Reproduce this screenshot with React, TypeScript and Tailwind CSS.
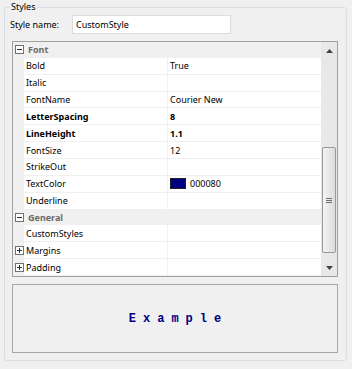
type Row =
  | { kind: "cat"; label: string }
  | { kind: "prop"; label: string; value?: string; bold?: boolean; expand?: boolean; swatch?: string };

const rows: Row[] = [
  { kind: "cat", label: "Font" },
  { kind: "prop", label: "Bold", value: "True" },
  { kind: "prop", label: "Italic" },
  { kind: "prop", label: "FontName", value: "Courier New" },
  { kind: "prop", label: "LetterSpacing", value: "8", bold: true },
  { kind: "prop", label: "LineHeight", value: "1.1", bold: true },
  { kind: "prop", label: "FontSize", value: "12" },
  { kind: "prop", label: "StrikeOut" },
  { kind: "prop", label: "TextColor", value: "000080", swatch: "#000080" },
  { kind: "prop", label: "Underline" },
  { kind: "cat", label: "General" },
  { kind: "prop", label: "CustomStyles" },
  { kind: "prop", label: "Margins", expand: true },
  { kind: "prop", label: "Padding", expand: true },
];

function ToggleBox({ open }: { open: boolean }) {
  return (
    <svg width="9" height="9" viewBox="0 0 9 9" className="shrink-0">
      <rect x="0.5" y="0.5" width="8" height="8" fill="#fff" stroke="#707070" />
      <path d="M2 4.5h5" stroke="#303030" />
      {!open && <path d="M4.5 2v5" stroke="#303030" />}
    </svg>
  );
}

function GridRow({ row }: { row: Row }) {
  if (row.kind === "cat") {
    return (
      <div className="flex-1 flex items-center bg-[#f0f0f0] pl-[2px]">
        <ToggleBox open />
        <span className="ml-[4px] font-bold text-[#6a6a6a]">{row.label}</span>
      </div>
    );
  }
  return (
    <div className="flex-1 flex bg-[#f0f0f0] pb-[1px]">
      <div className="w-[11px] flex items-center pl-[2px]">
        {row.expand && <ToggleBox open={false} />}
      </div>
      <div className={`w-[143px] bg-white flex items-center pl-[2px] text-black ${row.bold ? "font-bold" : ""}`}>
        {row.label}
      </div>
      <div className={`ml-[1px] flex-1 bg-white flex items-center pl-[2px] text-black ${row.bold ? "font-bold" : ""}`}>
        {row.swatch && (
          <span className="w-[16px] h-[11px] mr-[4px] bg-[#000080] border border-[#202020]" />
        )}
        {row.value}
      </div>
    </div>
  );
}

function ScrollBar() {
  return (
    <div className="w-[16px] bg-[#e8e8e8] flex flex-col">
      <div className="h-[17px] flex items-center justify-center">
        <svg width="7" height="4" viewBox="0 0 7 4">
          <path d="M3.5 0L7 4H0z" fill="#404040" />
        </svg>
      </div>
      <div className="h-[88px]" />
      <div className="mx-[1px] h-[106px] rounded-[2px] border border-[#9a9a9a] bg-gradient-to-r from-[#f4f4f4] to-[#dcdcdc] flex items-center justify-center">
        <div className="flex flex-col gap-[1px]">
          <div className="w-[6px] h-[1px] bg-[#707070]" />
          <div className="w-[6px] h-[1px] bg-[#707070]" />
          <div className="w-[6px] h-[1px] bg-[#707070]" />
        </div>
      </div>
      <div className="flex-1 flex items-end justify-center pb-[6px]">
        <svg width="7" height="4" viewBox="0 0 7 4">
          <path d="M0 0H7L3.5 4z" fill="#404040" />
        </svg>
      </div>
    </div>
  );
}

export default function App() {
  return (
    <div className="w-[352px] h-[369px] bg-[#f0f0f0] pt-[7px] pl-[4px] text-[9px] leading-none font-['Noto_Sans',sans-serif]">
      <div className="relative w-[343px] h-[354px] border border-[#d5dfe5] rounded-[3px]">
        <span className="absolute left-[5px] top-[-6px] px-[1px] bg-[#f0f0f0] text-black">Styles</span>

        <div className="flex items-center mt-[7px] ml-[5px]">
          <span className="w-[62px] text-black">Style name:</span>
          <div className="w-[159px] h-[19px] bg-white border border-[#dcdcdc] flex items-center pl-[3px] text-black">
            CustomStyle
          </div>
        </div>

        <div className="mt-[7px] ml-[7px] w-[326px] h-[236px] border border-[#a0a0a0] flex">
          <div className="flex-1 flex flex-col">
            {rows.map((r) => (
              <GridRow key={r.label} row={r} />
            ))}
          </div>
          <ScrollBar />
        </div>

        <div className="mt-[7px] ml-[7px] w-[326px] h-[69px] border border-[#a8a8a8] flex items-center justify-center">
          <span className="font-['Liberation_Mono',monospace] font-bold text-[12px] tracking-[7px] text-[#000080] mr-[-7px]">
            Example
          </span>
        </div>
      </div>
    </div>
  );
}
